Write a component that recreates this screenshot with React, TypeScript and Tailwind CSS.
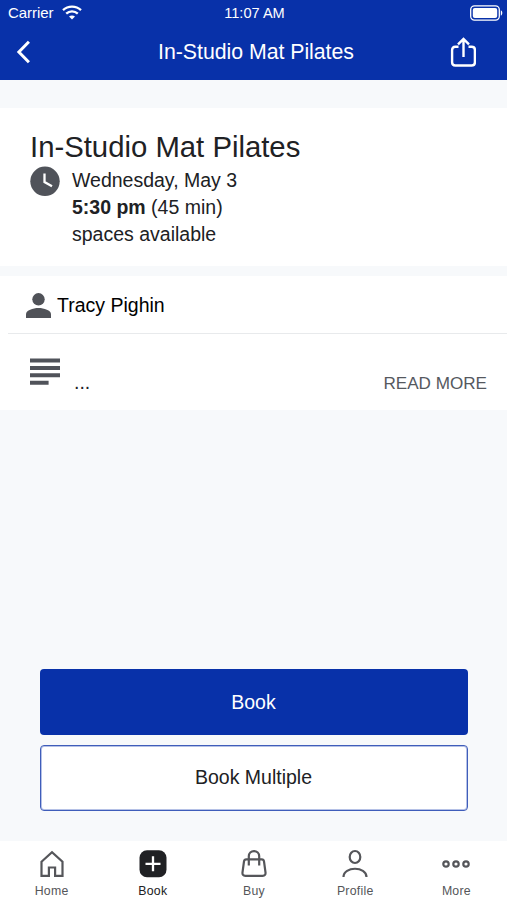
import type { ReactNode } from "react";

function StatusBar() {
  return (
    <div className="grid h-6 grid-cols-3 items-center pl-2 pr-[4px] text-[15px] leading-6">
      <div className="flex items-center gap-2">
        <span className="pt-px tracking-[-0.05px]">Carrier</span>
        <svg className="h-[15px] w-[20px]" viewBox="0 0 20 15" fill="none" stroke="currentColor" strokeWidth="2.3">
          <path d="M1 5.2C6 .4 14 .4 19 5.2" />
          <path d="M4.2 8.7C7.5 5.5 12.5 5.5 15.8 8.7" />
          <path d="M10 14.6 7 11.6C8.6 10 11.4 10 13 11.6Z" fill="currentColor" stroke="none" />
        </svg>
      </div>
      <span className="pr-[2px] text-center text-[14.6px]">11:07 AM</span>
      <svg className="mt-px h-4 w-[33px] justify-self-end" viewBox="0 0 33 16" fill="none">
        <rect x=".7" y=".9" width="28.6" height="14.2" rx="3.8" stroke="currentColor" strokeWidth="1.3" />
        <rect x="2.8" y="3" width="24.4" height="10" rx="2" fill="currentColor" />
        <path d="M30.8 5.3c2 .8 2 4.6 0 5.4Z" fill="currentColor" />
      </svg>
    </div>
  );
}

function Header() {
  return (
    <header className="h-20 bg-[#0831a9] text-white">
      <StatusBar />
      <div className="grid h-14 grid-cols-[60px_1fr_60px] items-center">
        <button aria-label="Back" className="pl-[15px]">
          <svg className="h-6 w-4" viewBox="0 0 16 24" fill="none" stroke="currentColor" strokeWidth="3">
            <path d="M13.9 1.8 3.9 12l10 10.2" />
          </svg>
        </button>
        <h1 className="pl-[5px] text-center text-[21.3px] leading-[56px] tracking-[-0.03px]">In-Studio Mat Pilates</h1>
        <button aria-label="Share">
          <svg className="ml-[3px] h-[31px] w-[26px]" viewBox="0 0 26 31" fill="none" stroke="currentColor" strokeWidth="2.4">
            <path d="M8.5 9.8H5.300Q2.100 9.800 2.100 13v12.300q0 3.200 3.200 3.200h16.400q3.200 0 3.200-3.200V13q0-3.200-3.200-3.200H18.500" />
            <path d="M13.500 20V2M8 7.400 13.500 1.900l5.500 5.500" />
          </svg>
        </button>
      </div>
    </header>
  );
}

function ClassSummary() {
  return (
    <section aria-label="Class" className="h-[158px] bg-white pl-[30px] pt-[21px] text-[#202124]">
      <h2 className="text-[29.3px] leading-[35px]">In-Studio Mat Pilates</h2>
      <div className="flex gap-3 pt-[2px]">
        <svg className="h-[30px] w-[30px]" viewBox="0 0 30 30" fill="none">
          <circle cx="15" cy="15.3" r="14.7" fill="#50535a" />
          <path d="M14.5 7.500V16l7.500 4.300" stroke="white" strokeWidth="2.300" />
        </svg>
        <div className="pt-px text-[19.5px] leading-[27px]">
          <p>Wednesday, May 3</p>
          <p><b>5:30 pm</b> (45 min)</p>
          <p>spaces available</p>
        </div>
      </div>
    </section>
  );
}

function ClassDetails() {
  return (
    <section aria-label="Details" className="mt-[10px] h-[134px] bg-white">
      <div className="ml-2 flex h-[58px] items-center border-b border-[#e8eaec] pl-[18px] text-[19.5px] text-black">
        <svg className="mt-px h-[25px] w-[25px]" viewBox="0 0 25 25" fill="#505258">
          <circle cx="12.5" cy="6.3" r="6.2" />
          <path d="M0 25v-3.800c0-3.900 7-6.200 12.500-6.200S25 17.300 25 21.200V25Z" />
        </svg>
        <span className="pl-[6px] pt-[2px]">Tracy Pighin</span>
      </div>
      <div className="flex h-[76px] items-start pl-[30px] pr-5">
        <svg className="mt-[24px] h-[27px] w-[30px]" viewBox="0 0 30 27" fill="#50535a">
          <path d="M0 .5h30v4H0zM0 7.900h30v4H0zM0 15.300h30v4H0zM0 22.700h18.600v4H0z" />
        </svg>
        <span className="ml-[14px] mt-[36px] text-[19.5px] leading-6 text-[#202124]">...</span>
        <button className="ml-auto mt-[38px] text-[17.1px] leading-6 text-[#55585e]">READ MORE</button>
      </div>
    </section>
  );
}

function Tab({ label, active, children }: { label: string; active?: boolean; children: ReactNode }) {
  return (
    <button className={`flex flex-col items-center pt-[8px] ${active ? "text-[#202124]" : "text-[#55565a]"}`}>
      <svg className="h-[30px] w-[30px]" viewBox="0 0 30 30" fill="none" stroke="currentColor" strokeWidth="2.2">
        {children}
      </svg>
      <span className="pt-[4px] text-[12.3px] leading-4 tracking-[0.25px]">{label}</span>
    </button>
  );
}

function TabBar() {
  return (
    <nav className="grid h-[59px] grid-cols-5 bg-white pl-px">
      <Tab label="Home">
        <path d="M4.5 12.7 15 3.2l10.5 9.5v14.1h-7.4v-8.3h-6.2v8.3H4.5Z" />
      </Tab>
      <Tab label="Book" active>
        <rect x="1.5" y="1.2" width="27" height="27" rx="7.5" fill="currentColor" stroke="none" />
        <path d="M15 7.3v15M7.5 14.8h15" stroke="white" strokeWidth="2.3" />
      </Tab>
      <Tab label="Buy">
        <path d="M7.3 10.3h15.400q2 0 2.300 2l1.500 11q.4 3.500-2.800 3.500H6.300q-3.200 0-2.800-3.500l1.500-11q.3-2 2.300-2Z" />
        <path d="M9.800 16.500V7.300a5.200 5.200 0 0 1 10.400 0v9.200" />
      </Tab>
      <Tab label="Profile">
        <ellipse cx="15" cy="8" rx="5.3" ry="6" />
        <path d="M3.5 28c0-11 23-11 23 0" />
      </Tab>
      <Tab label="More">
        <circle cx="5" cy="15" r="2.7" />
        <circle cx="15" cy="15" r="2.7" />
        <circle cx="25" cy="15" r="2.7" />
      </Tab>
    </nav>
  );
}

export default function App() {
  return (
    <div className="flex h-[900px] w-[507px] flex-col overflow-hidden bg-[#f7f9fb] font-['Liberation_Sans',Arial,sans-serif]">
      <Header />
      <main className="flex flex-1 flex-col pt-7">
        <ClassSummary />
        <ClassDetails />
        <div className="mx-[39.5px] mb-[30px] mt-auto flex flex-col gap-[10px] text-[19.5px]">
          <button className="h-[66px] rounded-[4px] bg-[#0831a9] pt-px text-white">Book</button>
          <button className="h-[66px] rounded-[4px] border border-[#3f5dba] bg-white text-[#202124] shadow-[inset_0_0_0_1px_#b5c1e6]">Book Multiple</button>
        </div>
      </main>
      <TabBar />
    </div>
  );
}
